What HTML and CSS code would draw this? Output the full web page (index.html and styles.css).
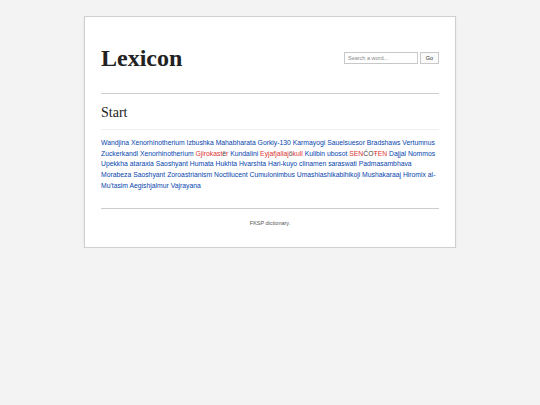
FILE: index.html
```html
<!DOCTYPE html>
<html>
<head>
<meta charset="utf-8">
<link rel="stylesheet" href="styles.css">
</head>
<body>
<div class="card">
  <header class="top">
    <h1 class="title">Lexicon</h1>
    <form class="search">
      <input class="search-input" type="text" placeholder="Search a word...">
      <button class="go" type="button">Go</button>
    </form>
  </header>
  <hr class="rule">
  <h2 class="section">Start</h2>
  <p class="words">
    <a href="#">Wandjina</a> <a href="#">Xenorhinotherium</a> <a href="#">Izbushka</a> <a href="#">Mahabharata</a> <a href="#">Gorkiy-130</a> <a href="#">Karmayogi</a> <a href="#">Sauelsuesor</a> <a href="#">Bradshaws</a> <a href="#">Vertumnus</a> <a href="#">Zuckerkandl</a> <a href="#">Xenorhinotherium</a> <a class="new" href="#">Gjirokast<span class="dia">ë</span>r</a> <a href="#">Kundalini</a> <a class="new" href="#">Eyjafjallaj<span class="dia">ö</span>kull</a> <a href="#">Kulibin</a> <a href="#">ubosot</a> <a class="new" href="#">SEN<span class="dia">ĆO</span>ŦEN</a> <a href="#">Dajjal</a> <a href="#">Nommos</a> <a href="#">Upekkha</a> <a href="#">ataraxia</a> <a href="#">Saoshyant</a> <a href="#">Humata</a> <a href="#">Hukhta</a> <a href="#">Hvarshta</a> <a href="#">Hari-kuyo</a> <a href="#">clinamen</a> <a href="#">saraswati</a> <a href="#">Padmasambhava</a> <a href="#">Morabeza</a> <a href="#">Saoshyant</a> <a href="#">Zoroastrianism</a> <a href="#">Noctilucent</a> <a href="#">Cumulonimbus</a> <a href="#">Umashiashikabihikoji</a> <a href="#">Mushakaraaj</a> <a href="#">Hiromix</a> <a href="#">al-Mu'tasim</a> <a href="#">Aegishjalmur</a> <a href="#">Vajrayana</a>
  </p>
  <hr class="rule foot-rule">
  <footer class="footer">FKSP dictionary.</footer>
</div>
</body>
</html>
```

FILE: styles.css
```css
html, body {
  margin: 0;
  padding: 0;
}
body {
  background: #f3f3f3;
  padding: 16px 0 0 84px;
  font-family: "Liberation Sans", Arial, sans-serif;
}
.card {
  width: 338px;
  background: #fff;
  border: 1px solid #cfcfcf;
  box-shadow: 0 1px 2px rgba(0,0,0,0.08);
  padding: 0 16px 21px 16px;
}
.top {
  display: flex;
  align-items: center;
  justify-content: space-between;
  height: 76px;
}
.title {
  margin: 0;
  padding-top: 6px;
  font-family: "Liberation Serif", "Times New Roman", serif;
  font-weight: bold;
  font-size: 24px;
  color: #222;
}
.search {
  display: flex;
  gap: 2px;
  margin: 0;
  padding-top: 6px;
}
.search-input {
  box-sizing: border-box;
  width: 74px;
  height: 12px;
  border: 1px solid #c8c8c8;
  padding: 0 3px;
  font-family: "Liberation Sans", Arial, sans-serif;
  font-size: 5.5px;
  color: #555;
}
.search-input::placeholder {
  color: #888;
}
.go {
  box-sizing: border-box;
  width: 19px;
  height: 12px;
  border: 1px solid #c8c8c8;
  background: #fafafa;
  padding: 0;
  font-family: "Liberation Sans", Arial, sans-serif;
  font-size: 5.5px;
  color: #333;
}
.rule {
  border: 0;
  border-top: 1px solid #cdcdcd;
  margin: 0;
}
.section {
  margin: 0;
  padding: 11px 0 8px;
  font-family: "Liberation Serif", "Times New Roman", serif;
  font-weight: normal;
  font-size: 14px;
  color: #222;
  border-bottom: 1px solid #f0f0f0;
}
.words {
  margin: 8px 0 16px;
  font-size: 6.8px;
  line-height: 10.7px;
}
.words a {
  color: #0645ad;
  text-decoration: none;
}
.words a.new {
  color: #dd3333;
}
.words a.new .dia {
  color: #4a3a3a;
}
.footer {
  text-align: center;
  font-size: 5.5px;
  color: #555;
  padding-top: 11px;
}
```
